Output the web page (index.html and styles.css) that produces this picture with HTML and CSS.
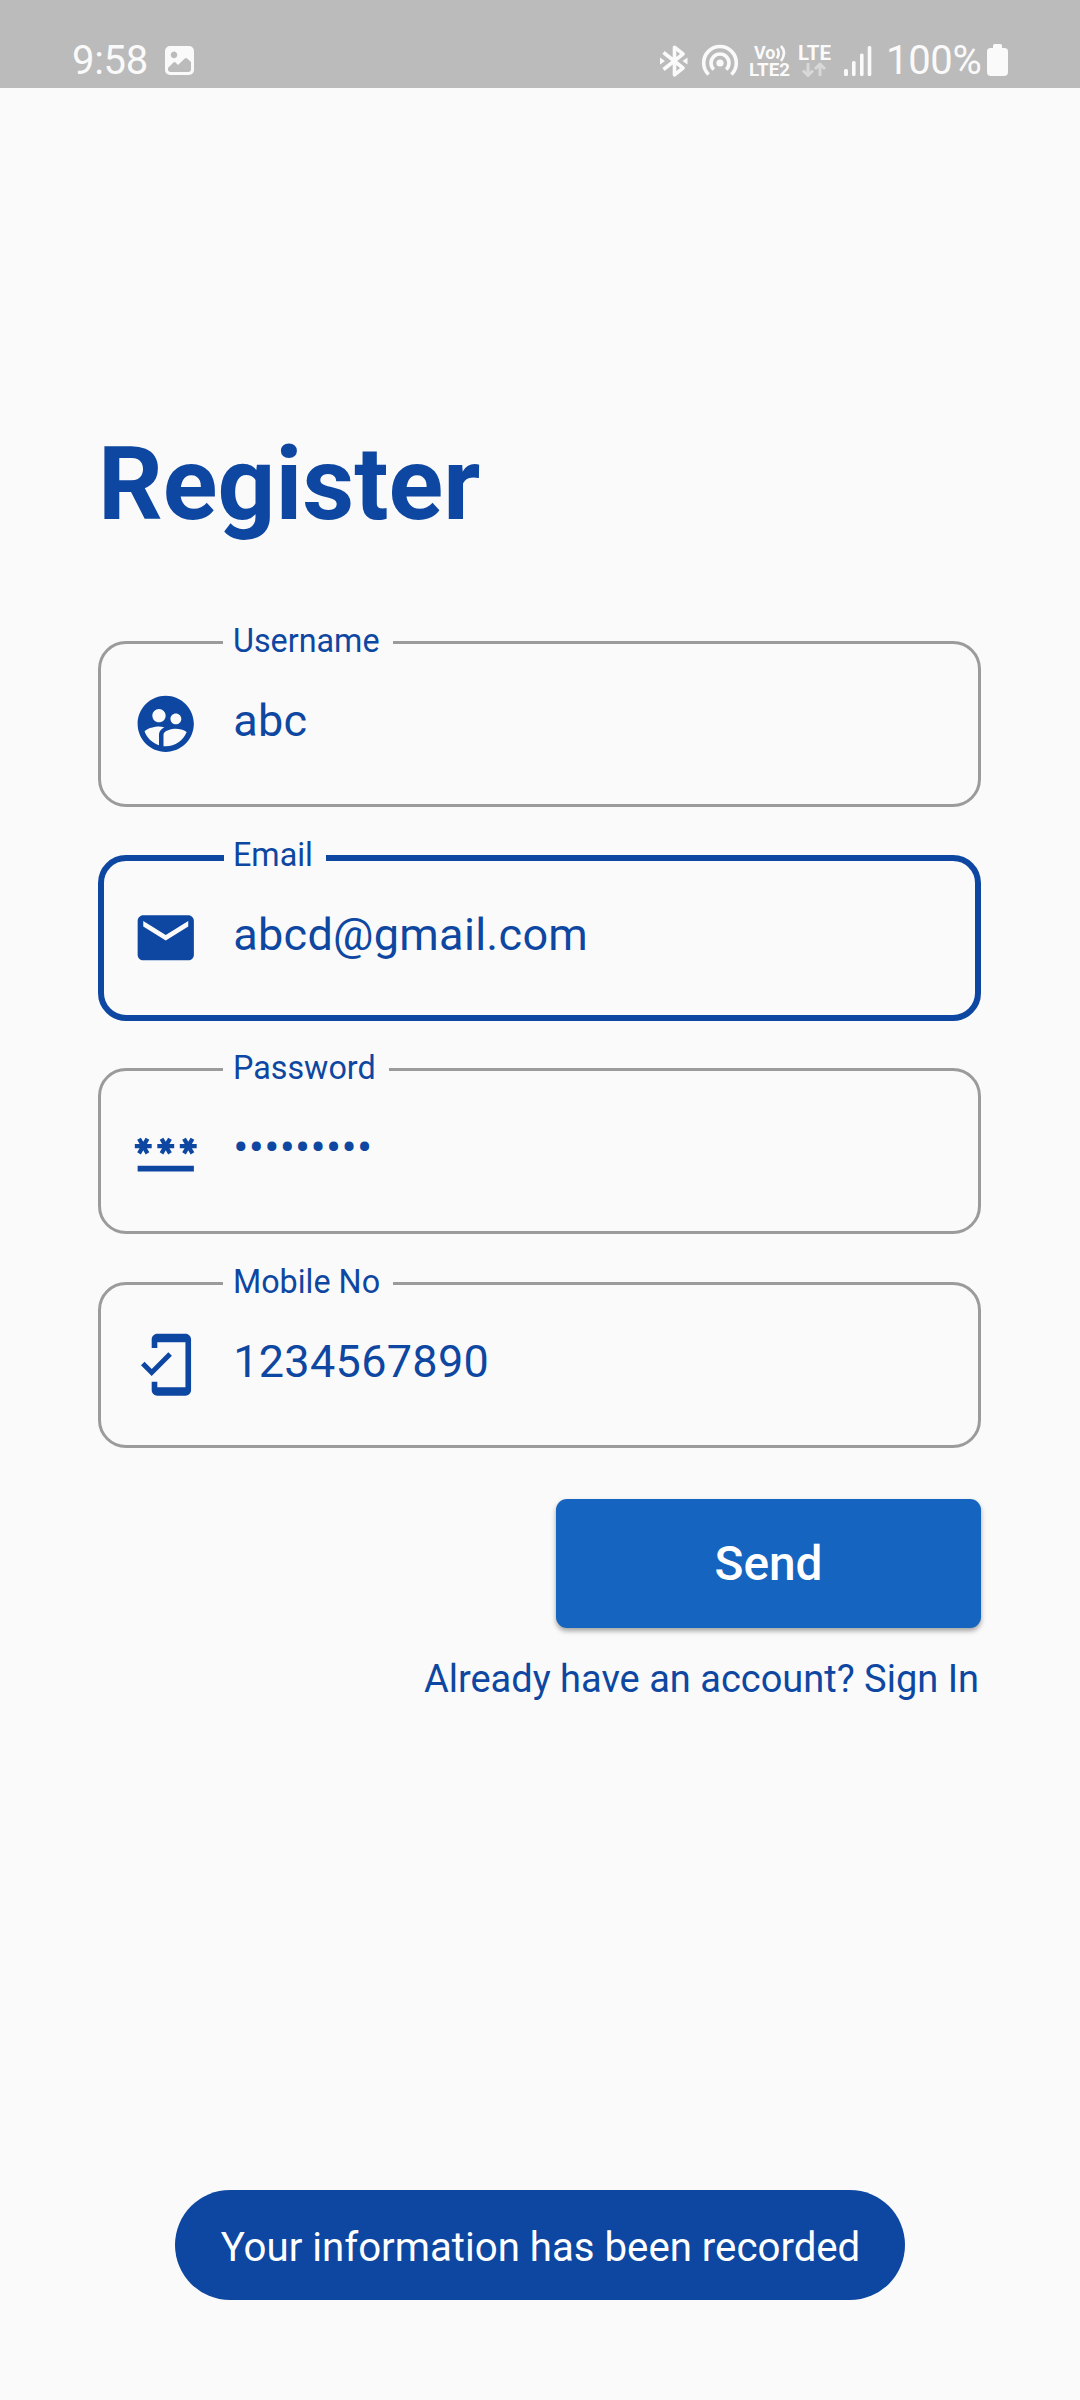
FILE: index.html
```html
<!DOCTYPE html>
<html lang="en">
<head>
<meta charset="utf-8">
<title>Register</title>
<link rel="stylesheet" href="styles.css">
</head>
<body>
<div class="screen">
  <header class="status-bar">
    <span class="clock">9:58</span>
    <svg class="picture-icon" viewBox="0 0 29 29"><path fill-rule="evenodd" d="M5 0h19a5 5 0 0 1 5 5v19a5 5 0 0 1-5 5H5a5 5 0 0 1-5-5V5a5 5 0 0 1 5-5zM9 5.600a3.300 3.300 0 1 0 .01 0zM3 22v1.500c0 1.500 1 2.500 2.500 2.500h18c1.500 0 2.500-1 2.500-2.500v-7.500l-3.800-3.500q-1.200-1-2.400 0l-6.300 6q-.5.500-1 0L10.600 16.500q-1.100-1-2.200 0z"/></svg>
    <div class="status-right">
      <svg class="bluetooth" viewBox="0 0 28 32"><path class="line" d="M3.500 7.500 23 23 14.500 29.800V2.200L23 9 3.500 24.500"/><path d="M0 12.500v7l5-3.500zM27.500 12.500v7l-5-3.500z"/></svg>
      <svg class="hotspot" viewBox="0 0 38 34"><circle cx="19" cy="19" r="3.600"/><path class="line" d="M12.800 25.500a9 9 0 1 1 12.400 0M7.600 30.500a16.300 16.300 0 1 1 22.800 0"/></svg>
      <svg class="volte" viewBox="0 -6 42 46"><text x="5" y="15" textLength="21.500" lengthAdjust="spacingAndGlyphs">Vo</text><path class="line" d="M28 4.500q3.500 4.500 0 10M32 2q6 6.500 0 15"/><text x="0" y="32" textLength="41" lengthAdjust="spacingAndGlyphs">LTE2</text></svg>
      <svg class="lte" viewBox="0 -6 34 46"><text x="0" y="16" textLength="33" lengthAdjust="spacingAndGlyphs">LTE</text><path class="line arrows" d="M10 19v12M5 26.500l5 5 5-5M22 32V20M17 25l5-5 5 5"/></svg>
      <svg class="signal" viewBox="0 0 28 30"><rect y="23" width="4" height="7" rx="1.500"/><rect x="8" y="15" width="3.600" height="15" rx="1.500"/><rect x="16" y="7.500" width="3.600" height="22.500" rx="1.500"/><rect x="23.700" width="3.600" height="30" rx="1.500"/></svg>
      <span class="percent">100%</span>
      <svg class="battery" viewBox="0 0 21 32"><path d="M7.500 0h6a1.500 1.500 0 0 1 1.500 1.500V4h2.500A3.500 3.500 0 0 1 21 7.500V28a4 4 0 0 1-4 4H4a4 4 0 0 1-4-4V7.500A3.500 3.500 0 0 1 3.500 4H6V1.500A1.500 1.500 0 0 1 7.500 0z"/></svg>
    </div>
  </header>

  <main class="content">
    <h1 class="title">Register</h1>
    <form class="form">
      <fieldset class="field">
        <legend class="label">Username</legend>
        <div class="row">
          <svg class="icon" viewBox="0 0 24 24"><path d="M11.990 2c-5.520 0-10 4.480-10 10s4.480 10 10 10 10-4.480 10-10-4.480-10-10-10zm3.610 6.340c1.070 0 1.930.86 1.930 1.930 0 1.070-.86 1.930-1.930 1.930-1.070 0-1.930-.86-1.930-1.930-.01-1.070.86-1.930 1.930-1.930zm-6-1.580c1.300 0 2.360 1.060 2.360 2.360 0 1.300-1.060 2.360-2.360 2.360s-2.360-1.060-2.360-2.360c0-1.310 1.050-2.360 2.360-2.360zm0 9.130v3.750c-2.400-.75-4.300-2.600-5.140-4.960 1.050-1.120 3.670-1.690 5.140-1.690.53 0 1.200.08 1.900.22-1.640.87-1.900 2.020-1.900 2.680zM11.990 20c-.27 0-.53-.01-.79-.04v-4.070c0-1.420 2.940-2.130 4.400-2.130 1.070 0 2.920.39 3.840 1.150-1.170 2.970-4.060 5.090-7.450 5.090z"/></svg>
          <span class="value">abc</span>
        </div>
      </fieldset>
      <fieldset class="field focused">
        <legend class="label">Email</legend>
        <div class="row">
          <svg class="icon" viewBox="0 0 24 24"><path d="M20 4H4c-1.100 0-1.990.9-1.990 2L2 18c0 1.100.9 2 2 2h16c1.100 0 2-.9 2-2V6c0-1.100-.9-2-2-2zm0 4l-8 5-8-5V6l8 5 8-5v2z"/></svg>
          <span class="value">abcd@gmail.com</span>
        </div>
      </fieldset>
      <fieldset class="field">
        <legend class="label">Password</legend>
        <div class="row">
          <svg class="icon" viewBox="0 0 24 24"><path d="M2 17h20v2H2v-2zm1.150-4.050L4 11.470l.85 1.480 1.300-.75-.85-1.480H7v-1.500H5.300l.85-1.470L4.850 7 4 8.470 3.150 7l-1.300.75.85 1.470H1v1.500h1.700l-.85 1.480 1.300.75zm6.700-.75l1.300.75.85-1.480.85 1.480 1.300-.75-.85-1.480H15v-1.500h-1.700l.85-1.470-1.300-.75L12 8.470 11.150 7l-1.300.75.85 1.470H9v1.500h1.700l-.85 1.480zM23 9.220h-1.700l.85-1.470-1.300-.75L20 8.470 19.150 7l-1.300.75.85 1.470H17v1.500h1.700l-.85 1.480 1.300.75.85-1.480.85 1.480 1.300-.75-.85-1.480H23v-1.500z"/></svg>
          <span class="value">•••••••••</span>
        </div>
      </fieldset>
      <fieldset class="field">
        <legend class="label">Mobile No</legend>
        <div class="row">
          <svg class="icon" viewBox="0 0 24 24"><path d="M19 1H9c-1.100 0-2 .9-2 2v3h2V4h10v16H9v-2H7v3c0 1.100.9 2 2 2h10c1.100 0 2-.9 2-2V3c0-1.100-.9-2-2-2zM7.010 13.470l-2.550-2.550-1.270 1.270L7 16l7.190-7.190-1.270-1.270z"/></svg>
          <span class="value">1234567890</span>
        </div>
      </fieldset>
      <button class="send" type="button">Send</button>
      <p class="sign-in">Already have an account? Sign In</p>
    </form>
  </main>
  <div class="toast">Your information has been recorded</div>
</div>
</body>
</html>
```
FILE: styles.css
```css
* { box-sizing: border-box; }

body {
  margin: 0;
  background: #fafafa;
  color: #0e47a1;
  font-family: Roboto, sans-serif;
}

.screen {
  position: relative;
  width: 1080px;
  height: 2400px;
  overflow: hidden;
}

.status-bar {
  display: flex;
  align-items: flex-start;
  height: 88px;
  padding: 36px 72px 0 72px;
  background: #bbb;
  color: #fafafa;
  fill: #fafafa;
}

.status-bar svg { display: block; flex: none; }
.status-bar text { font-weight: 700; font-size: 17.500px; }
.line { fill: none; stroke: #fafafa; stroke-width: 3.600; stroke-linejoin: round; }

.clock { width: 93px; font-size: 40px; line-height: 50px; letter-spacing: -.3px; }
.picture-icon { width: 29px; height: 29px; margin-top: 10px; }

.status-right { display: flex; margin-left: auto; }
.bluetooth { width: 28px; height: 32px; margin: 9px 13px 0 0; }
.hotspot { width: 38px; height: 34px; margin: 8px 10px 0 0; }
.volte { width: 42px; height: 46px; margin: 2px 7px 0 0; }
.volte .line { stroke-width: 2.600; }
.lte { width: 34px; height: 46px; margin: 2px 12px 0 0; }
.status-bar .lte text { font-size: 20px; }
.lte .arrows { stroke: #d8d8d8; stroke-width: 3; }
.signal { width: 28px; height: 30px; margin: 10px 14px 0 0; }
.percent { width: 101px; font-size: 40px; line-height: 50px; letter-spacing: -.3px; }
.battery { width: 21px; height: 32px; margin-top: 8px; }

.content { padding: 336px 99px 0 98px; }

.title {
  margin: 0;
  font-size: 101.250px;
  font-weight: 700;
  line-height: 121px;
}

.form { display: flex; flex-direction: column; padding-top: 75px; }

.field {
  width: 883px;
  height: 187px;
  margin: 0 0 26.670px;
  padding: 25.200px 30px 0 31px;
  border: 3px solid #9b9b9b;
  border-radius: 28px;
}

.label {
  height: 45px;
  margin-left: 91px;
  padding: 0 13px 0 10px;
  font-size: 32.300px;
  line-height: 42px;
}

.focused { padding: 22.200px 27px 0 28px; border: 6px solid #0e47a1; }
.focused .label { height: 48px; margin-left: 92px; padding-left: 9px; }

.row { display: flex; align-items: center; height: 67.500px; gap: 33.700px; }
.icon { flex: none; width: 67.500px; height: 67.500px; fill: #0e47a1; }
.value { padding-bottom: 6px; font-size: 45px; line-height: 54px; letter-spacing: .3px; }

.send {
  align-self: flex-end;
  width: 425px;
  height: 129px;
  margin-top: 24px;
  padding: 0;
  border: 0;
  border-radius: 11px;
  background: #1565c0;
  box-shadow: 0 3px 5px rgba(0, 0, 0, .35);
  color: #fff;
  font: 500 47.800px/130px Roboto, sans-serif;
}

.sign-in {
  align-self: flex-end;
  margin: 28px 2px 0 0;
  font-size: 38px;
  line-height: 46px;
}

.toast {
  position: absolute;
  top: 2190px;
  left: 175px;
  width: 730px;
  height: 110px;
  padding-left: 1px;
  border-radius: 55px;
  background: #0e47a1;
  color: #fff;
  font-size: 40.200px;
  line-height: 115px;
  text-align: center;
}
```
